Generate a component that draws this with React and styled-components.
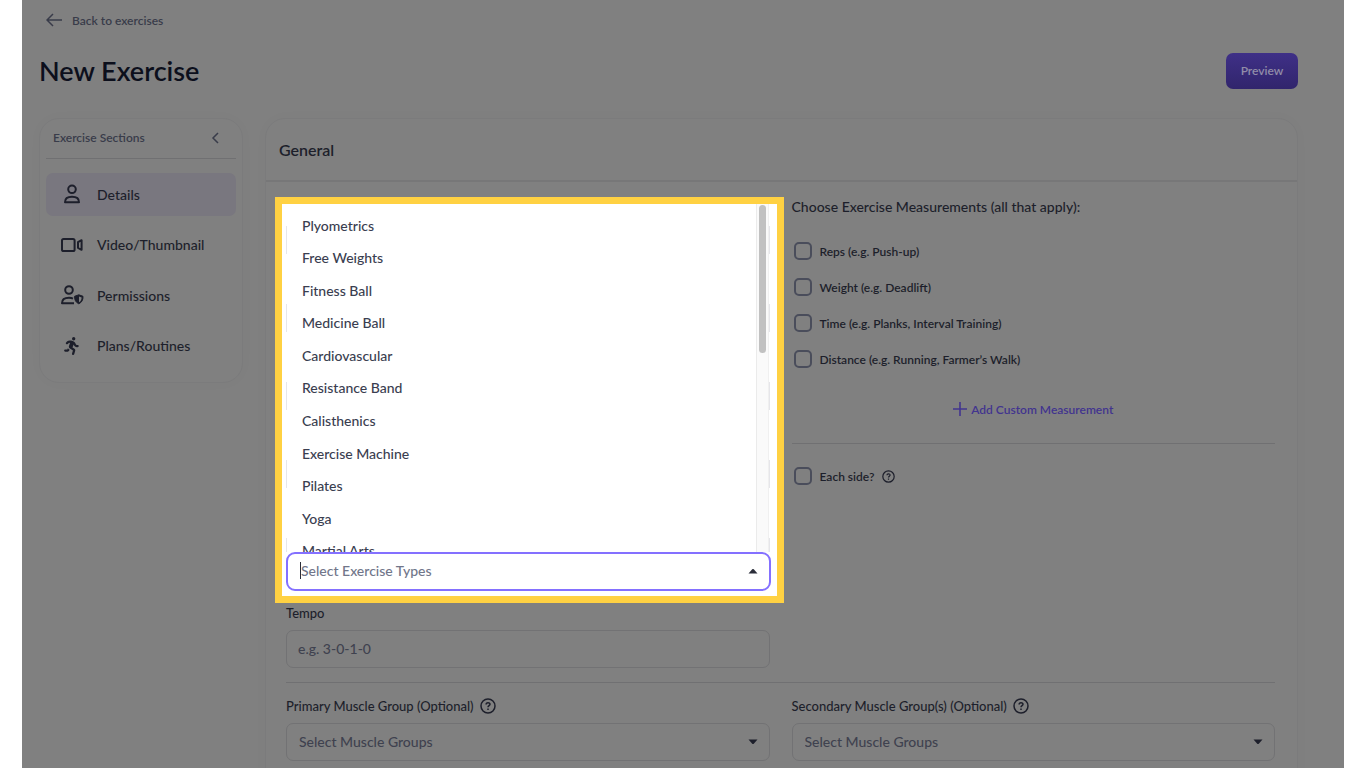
import React from "react";
import styled, { createGlobalStyle } from "styled-components";
import { FaPersonRunning } from "react-icons/fa6";

const exerciseTypes = [
  "Plyometrics",
  "Free Weights",
  "Fitness Ball",
  "Medicine Ball",
  "Cardiovascular",
  "Resistance Band",
  "Calisthenics",
  "Exercise Machine",
  "Pilates",
  "Yoga",
  "Martial Arts",
];

const measurements = [
  { id: "reps", label: "Reps (e.g. Push-up)" },
  { id: "weight", label: "Weight (e.g. Deadlift)" },
  { id: "time", label: "Time (e.g. Planks, Interval Training)" },
  { id: "distance", label: "Distance (e.g. Running, Farmer’s Walk)" },
];

const UserIcon = () => (
  <svg width="24" height="24" viewBox="0 0 24 24" fill="none" stroke="currentColor" strokeWidth="2">
    <circle cx="12" cy="7.3" r="3.8" />
    <path d="M5 20.2c0-3.6 2.7-5.4 7-5.4s7 1.8 7 5.4z" strokeLinejoin="round" />
  </svg>
);

const VideoIcon = () => (
  <svg width="24" height="24" viewBox="0 0 24 24" fill="none" stroke="currentColor" strokeWidth="2">
    <rect x="2" y="6" width="12.6" height="12" rx="1.6" />
    <path d="M21.6 7.2v9.6l-3.6-2V9.200z" strokeLinejoin="round" />
  </svg>
);

const UserShieldIcon = () => (
  <svg width="24" height="24" viewBox="0 0 24 24" fill="none" stroke="currentColor" strokeWidth="2">
    <circle cx="9" cy="7" r="3.8" />
    <path d="M14 20.2H2c0-3.6 2.7-5.4 7-5.4 1.600 0 2.800.2 4 .8" strokeLinejoin="round" />
    <path d="M18.800 11.800l4.200 1.500c.2 3.600-1.200 6.100-4.200 7.500-3-1.400-4.400-3.900-4.200-7.500z" fill="currentColor" strokeWidth="1" />
    <path d="M19 13.500l2.600.9c0 2.200-.8 3.700-2.600 4.800z" fill="#808080" stroke="none" />
  </svg>
);

const HelpIcon = ({ size }) => (
  <svg width={size} height={size} viewBox="0 0 16 16" fill="none" stroke="currentColor" strokeWidth="1.5">
    <circle cx="8" cy="8" r="7" />
    <path d="M6.100 6.500c0-2.400 3.900-2.400 3.900-.2 0 1.300-2 1.400-2 2.900" />
    <path d="M8 10.500v1.500" />
  </svg>
);

const Caret = ({ up }) => (
  <svg width="10" height="6" viewBox="0 0 10 6" fill="currentColor">
    <path d={up ? "M.5 5.500L4.200 1.300q.8-.8 1.600 0l3.700 4.200z" : "M.5.500l3.700 4.200q.8.800 1.600 0L9.500.500z"} />
  </svg>
);

const sections = [
  { label: "Details", icon: <UserIcon />, active: true },
  { label: "Video/Thumbnail", icon: <VideoIcon /> },
  { label: "Permissions", icon: <UserShieldIcon /> },
  { label: "Plans/Routines", icon: <FaPersonRunning size={18} /> },
];

const MuscleSelect = ({ id, label }) => (
  <Field>
    <FieldLabel htmlFor={id}>
      {label}
      <HelpIcon size={16} />
    </FieldLabel>
    <SelectBox>
      <Select id={id}>
        <option>Select Muscle Groups</option>
      </Select>
      <Caret />
    </SelectBox>
  </Field>
);

const App = () => {
  return (
    <>
      <GlobalStyle />
      <Page>
        <BackLink href="#">
          <svg width="16" height="14" viewBox="0 0 16 14" fill="none" stroke="currentColor" strokeWidth="1.5">
            <path d="M16 7H1M7 1L1 7l6 6" />
          </svg>
          Back to exercises
        </BackLink>
        <Header>
          <Title>New Exercise</Title>
          <PreviewButton>Preview</PreviewButton>
        </Header>
        <Columns>
          <Sidebar>
            <SidebarHeader>
              Exercise Sections
              <CollapseButton aria-label="Collapse sections">
                <svg width="8" height="12" viewBox="0 0 8 12" fill="none" stroke="currentColor" strokeWidth="1.5">
                  <path d="M7 1L2 6l5 5" />
                </svg>
              </CollapseButton>
            </SidebarHeader>
            <Nav>
              {sections.map((section) => (
                <NavItem key={section.label} href="#" $active={section.active}>
                  <NavIcon>{section.icon}</NavIcon>
                  {section.label}
                </NavItem>
              ))}
            </Nav>
          </Sidebar>
          <Card>
            <CardTitle>General</CardTitle>
            <FormGrid>
              <div>
                <Highlight>
                  <Menu>
                    <MenuEdge />
                    <Options role="listbox" id="types-list" aria-label="Exercise Types">
                      {exerciseTypes.map((type) => (
                        <Option key={type} role="option">
                          {type}
                        </Option>
                      ))}
                    </Options>
                    <Track>
                      <Thumb />
                    </Track>
                    <MenuEdge />
                  </Menu>
                  <Combo>
                    <TextCursor />
                    <ComboInput
                      role="combobox"
                      aria-label="Exercise Types"
                      aria-expanded="true"
                      aria-controls="types-list"
                      placeholder="Select Exercise Types"
                    />
                    <Caret up />
                  </Combo>
                </Highlight>
                <Field>
                  <FieldLabel htmlFor="tempo">Tempo</FieldLabel>
                  <TextInput id="tempo" placeholder="e.g. 3-0-1-0" />
                </Field>
              </div>
              <Measurements>
                <Legend>Choose Exercise Measurements (all that apply):</Legend>
                <CheckList>
                  {measurements.map((item) => (
                    <CheckLabel key={item.id} htmlFor={item.id}>
                      <Checkbox id={item.id} type="checkbox" />
                      {item.label}
                    </CheckLabel>
                  ))}
                </CheckList>
                <AddButton>
                  <svg width="14" height="14" viewBox="0 0 14 14" fill="none" stroke="currentColor" strokeWidth="1.6">
                    <path d="M7 0v14M0 7h14" />
                  </svg>
                  Add Custom Measurement
                </AddButton>
                <SideRow>
                  <CheckLabel htmlFor="each-side">
                    <Checkbox id="each-side" type="checkbox" />
                    Each side?
                    <HelpIcon size={13} />
                  </CheckLabel>
                </SideRow>
              </Measurements>
            </FormGrid>
            <MuscleGrid>
              <MuscleSelect id="primary" label="Primary Muscle Group (Optional)" />
              <MuscleSelect id="secondary" label="Secondary Muscle Group(s) (Optional)" />
            </MuscleGrid>
          </Card>
        </Columns>
      </Page>
    </>
  );
};

const GlobalStyle = createGlobalStyle`
  * {
    box-sizing: border-box;
  }
  body {
    margin: 0;
    background: #fff;
    color: #1d1f2b;
    font-family: Lato, "Liberation Sans", sans-serif;
    font-size: 14px;
    font-weight: 500;
  }
  input, select, button {
    font: inherit;
    color: inherit;
  }
  svg {
    flex: none;
  }
`;

const Page = styled.main`
  height: 100vh;
  overflow: hidden;
  margin: 0 22px;
  padding: 10px 46px 0 17px;
  background: #808080;
`;

const BackLink = styled.a`
  display: flex;
  align-items: center;
  width: fit-content;
  gap: 10px;
  height: 20px;
  padding-left: 7px;
  color: #393c4a;
  font-size: 12px;
  font-weight: 600;
  text-decoration: none;
`;

const Header = styled.header`
  display: flex;
  align-items: center;
  justify-content: space-between;
  margin: 23px 0 29px;
`;

const Title = styled.h1`
  margin: 0;
  color: #0c0f1c;
  font-size: 27px;
  line-height: 36px;
  font-weight: 600;
`;

const PreviewButton = styled.button`
  width: 72px;
  height: 36px;
  padding: 0 0 2px;
  border: 0;
  border-radius: 7px;
  background: linear-gradient(#3f3087, #31256c);
  color: #918da8;
  font-size: 12px;
  font-weight: 600;
`;

const Columns = styled.div`
  display: flex;
  align-items: flex-start;
  gap: 22px;
`;

const Sidebar = styled.aside`
  flex: none;
  width: 204px;
  padding: 0 6px 15px;
  border: 1px solid #7b7b7c;
  border-radius: 20px;
  box-shadow: 0 0 16px rgba(0, 0, 0, 0.02);
`;

const SidebarHeader = styled.div`
  display: flex;
  align-items: center;
  justify-content: space-between;
  height: 40px;
  padding: 0 17px 2px 7px;
  border-bottom: 1px solid #707072;
  color: #393c4a;
  font-size: 12px;
  font-weight: 600;
`;

const CollapseButton = styled.button`
  display: flex;
  padding: 0;
  border: 0;
  background: none;
`;

const Nav = styled.nav`
  display: grid;
  grid-auto-rows: 1fr;
  gap: 8px;
  height: 208px;
  padding-top: 14px;
`;

const NavItem = styled.a`
  display: flex;
  align-items: center;
  gap: 13px;
  padding-left: 14px;
  border-radius: 7px;
  background: ${(props) => (props.$active ? "#79777f" : "none")};
  color: #1d1f2b;
  font-size: 14px;
  text-decoration: none;
`;

const NavIcon = styled.span`
  display: flex;
  justify-content: center;
  width: 24px;
`;

const Card = styled.section`
  flex: 1;
  min-width: 0;
  padding-bottom: 40px;
  border: 1px solid #7b7b7c;
  border-radius: 20px;
  box-shadow: 0 0 16px rgba(0, 0, 0, 0.02);
`;

const CardTitle = styled.h2`
  margin: 0;
  padding: 0 13px;
  border-bottom: 2px solid #777778;
  font-size: 16px;
  line-height: 61px;
  font-weight: 600;
`;

const FormGrid = styled.div`
  display: grid;
  grid-template-columns: 1fr 1fr;
  gap: 22px;
  margin: 0 22px 0 20px;
  padding: 15px 0 14px;
  border-bottom: 1px solid #707072;
`;

const MuscleGrid = styled.div`
  display: grid;
  grid-template-columns: 1fr 1fr;
  gap: 22px;
  margin: 13px 22px 0 20px;
`;

const Highlight = styled.div`
  margin: 0 -14px 0 -11px;
  padding: 0 6px 5px 4px;
  border: 7px solid #ffd142;
  background: #fff;
`;

const Menu = styled.div`
  display: flex;
  height: 348px;
  padding-right: 1px;
  overflow: hidden;
`;

const MenuEdge = styled.div`
  width: 1px;
  background: repeating-linear-gradient(#fff 0 22px, #e6e6ea 22px 50px, #fff 50px 78px);
`;

const Options = styled.ul`
  display: grid;
  flex: 1;
  grid-auto-rows: 1fr;
  height: 358px;
  margin: 5px 0 0;
  padding: 0 15px;
  list-style: none;
`;

const Option = styled.li`
  display: flex;
  align-items: center;
  color: #3a3e50;
`;

const Track = styled.div`
  width: 13px;
  padding: 1px 2px;
  border-left: 1px solid #ebebeb;
  border-right: 1px solid #f0f0f0;
  background: #fafafa;
`;

const Thumb = styled.div`
  height: 148px;
  border-radius: 4px;
  background: #c1c1c1;
`;

const Combo = styled.div`
  display: flex;
  align-items: center;
  height: 39px;
  padding: 0 11px 2px 12px;
  border: 2px solid #8470ff;
  border-radius: 9px;
  color: #2b2e3a;
`;

const TextCursor = styled.span`
  width: 1px;
  height: 17px;
  background: #2b2e3a;
`;

const ComboInput = styled.input`
  flex: 1;
  min-width: 0;
  padding: 0;
  border: 0;
  outline: 0;
  background: none;
  &::placeholder {
    color: #71768a;
    opacity: 1;
  }
`;

const Field = styled.div`
  display: flex;
  flex-direction: column;
  gap: 7px;
`;

const FieldLabel = styled.label`
  display: flex;
  align-items: center;
  gap: 6px;
  height: 20px;
  font-size: 13px;
`;

const TextInput = styled.input`
  height: 38px;
  padding: 0 11px 2px;
  border: 1px solid #727274;
  border-radius: 7px;
  background: none;
  &::placeholder {
    color: #3f424f;
    opacity: 1;
  }
`;

const SelectBox = styled.div`
  display: grid;
  align-items: center;
  & > * {
    grid-area: 1 / 1;
  }
  svg {
    justify-self: end;
    margin-right: 12px;
    pointer-events: none;
  }
`;

const Select = styled.select`
  appearance: none;
  height: 38px;
  padding: 0 12px 2px;
  border: 1px solid #727274;
  border-radius: 7px;
  background: none;
  color: #3f424f;
`;

const Measurements = styled.fieldset`
  min-width: 0;
  margin: 0;
  padding: 0;
  border: 0;
`;

const Legend = styled.legend`
  padding: 0;
  font-size: 14px;
  line-height: 20px;
`;

const CheckList = styled.div`
  display: flex;
  flex-direction: column;
  gap: 16px;
  padding-top: 24px;
`;

const CheckLabel = styled.label`
  display: flex;
  align-items: center;
  gap: 8px;
  height: 20px;
  padding-left: 2px;
  font-size: 12px;
  font-weight: 600;
`;

const Checkbox = styled.input`
  appearance: none;
  width: 18px;
  height: 18px;
  margin: 0;
  border: 2px solid #4a4d5b;
  border-radius: 5px;
`;

const AddButton = styled.button`
  display: flex;
  align-items: center;
  gap: 4px;
  height: 20px;
  margin: 31px auto 23px;
  padding: 0 0 2px;
  border: 0;
  background: none;
  color: #42348f;
  font-size: 12px;
  font-weight: 600;
`;

const SideRow = styled.div`
  padding-top: 22px;
  border-top: 1px solid #707072;
`;

export default App;
